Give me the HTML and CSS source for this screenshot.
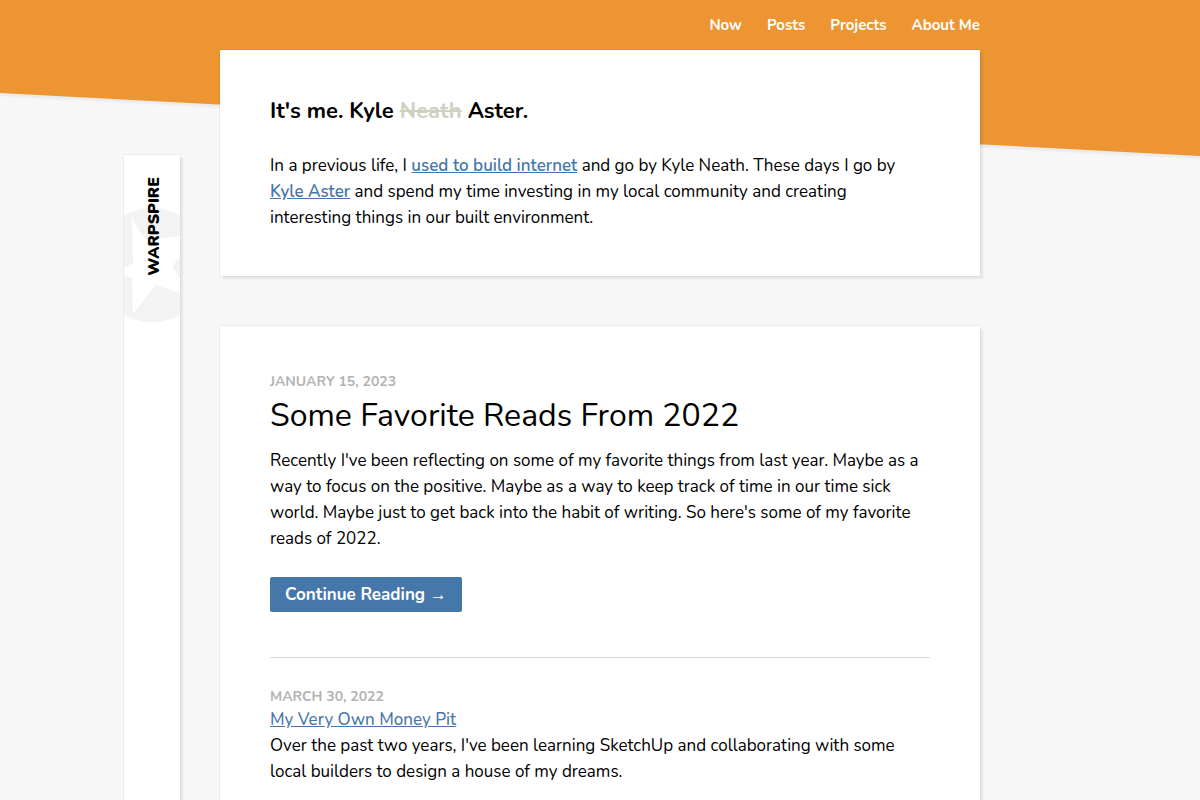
FILE: index.html
```html
<!DOCTYPE html>
<html lang="en">
<head>
  <meta charset="UTF-8">
  <meta name="viewport" content="width=device-width, initial-scale=1.0">
  <title>Warpspire</title>
  <link rel="stylesheet" href="styles.css">
</head>
<body>
  <div class="slant"></div>

  <div class="site">
    <aside class="sidebar">
      <svg class="star" viewBox="0 0 56 116" aria-hidden="true">
        <circle cx="28" cy="58" r="57" fill="#f3f3f3"/>
        <path d="M0 61 L9 56 L8 8 Q13 24 23 33 L56 29 V49 L48 60 L56 71 V86 L32 78 L9 107 L8 71 L0 68 Z" fill="#fff"/>
      </svg>
      <a class="logo" href="/">WARPSPIRE</a>
    </aside>

    <div class="content">
      <nav class="nav">
        <a href="/now">Now</a>
        <a href="/posts">Posts</a>
        <a href="/projects">Projects</a>
        <a href="/about">About Me</a>
      </nav>

      <section class="card intro">
        <h1>It's me. Kyle <del>Neath</del> Aster.</h1>
        <p>In a previous life, I <a href="/internet">used to build internet</a> and go by Kyle Neath. These days I go by <a href="/about">Kyle Aster</a> and spend my time investing in my local community and creating interesting things in our built environment.</p>
      </section>

      <main class="card posts">
        <article class="featured">
          <time datetime="2023-01-15">January 15, 2023</time>
          <h2>Some Favorite Reads From 2022</h2>
          <p>Recently I've been reflecting on some of my favorite things from last year. Maybe as a way to focus on the positive. Maybe as a way to keep track of time in our time sick world. Maybe just to get back into the habit of writing. So here's some of my favorite reads of 2022.</p>
          <a class="button" href="/posts/favorite-reads-2022">Continue Reading <span class="arrow">→</span></a>
        </article>

        <article class="post">
          <time datetime="2022-03-30">March 30, 2022</time>
          <h3><a href="/posts/money-pit">My Very Own Money Pit</a></h3>
          <p>Over the past two years, I've been learning SketchUp and collaborating with some local builders to design a house of my dreams.</p>
        </article>
      </main>
    </div>
  </div>
</body>
</html>
```
FILE: styles.css
```css
* { box-sizing: border-box; }
body {
  margin: 0;
  position: relative;
  overflow-x: hidden;
  background: #f7f7f7;
  color: #000;
  font-family: Nunito, Lato, sans-serif;
  font-size: 17px;
  line-height: 26px;
}
h1, h2, h3, p { margin: 0; }
a { color: #4677ab; }

.slant {
  position: absolute;
  z-index: -1;
  top: -200px;
  left: 0;
  width: 100%;
  height: 293px;
  background: #ec9532;
  box-shadow: 0 3px 2px rgba(0,0,0,0.05);
  transform: skewY(3deg);
  transform-origin: 0 0;
}

.site {
  display: grid;
  grid-template-columns: minmax(0, 1fr) minmax(0, 760px) minmax(0, 1fr);
}

.sidebar, .card {
  background: #fff;
  box-shadow: 0 0 1px rgba(0,0,0,0.25), 3px 3px 1px rgba(0,0,0,0.06);
}

.sidebar {
  position: relative;
  justify-self: end;
  width: 56px;
  margin: 155px 40px 0 0;
  padding-top: 22px;
}
.star {
  position: absolute;
  top: 52px;
  left: 0;
  width: 56px;
  height: 116px;
}
.logo {
  position: relative;
  display: block;
  margin-left: 17px;
  color: #000;
  font-size: 16px;
  font-weight: 900;
  text-decoration: none;
  writing-mode: vertical-rl;
  transform: rotate(180deg);
}

.nav {
  display: flex;
  justify-content: flex-end;
  align-items: center;
  gap: 25px;
  height: 50px;
}
.nav a {
  color: #fff;
  font-size: 15px;
  font-weight: bold;
  text-decoration: none;
}

.card { padding: 46px 50px 45px; }
.intro { margin-bottom: 50px; }
.intro h1 {
  margin-bottom: 26px;
  font-size: 22px;
  font-weight: bold;
  line-height: 31px;
}
.intro h1 del { color: #d0d0c0; }
.intro p a { font-weight: 600; }

time {
  display: block;
  color: #b3b3b3;
  font-size: 14px;
  font-weight: bold;
  line-height: 20px;
  text-transform: uppercase;
}
.featured {
  padding-bottom: 45px;
  border-bottom: 1px solid #d8d8d8;
}
.featured h2 {
  margin-bottom: 8px;
  font-size: 32px;
  font-weight: normal;
  line-height: 48px;
}
.button {
  display: inline-block;
  margin-top: 25px;
  padding: 0 15px;
  background: #4677ab;
  border-radius: 2px;
  color: #fff;
  font-weight: bold;
  line-height: 35px;
  text-decoration: none;
  vertical-align: top;
}
.arrow { font-family: "Liberation Sans", sans-serif; }

.post { padding-top: 29px; }
.post h3 {
  font-size: 17px;
  font-weight: 500;
}
```
